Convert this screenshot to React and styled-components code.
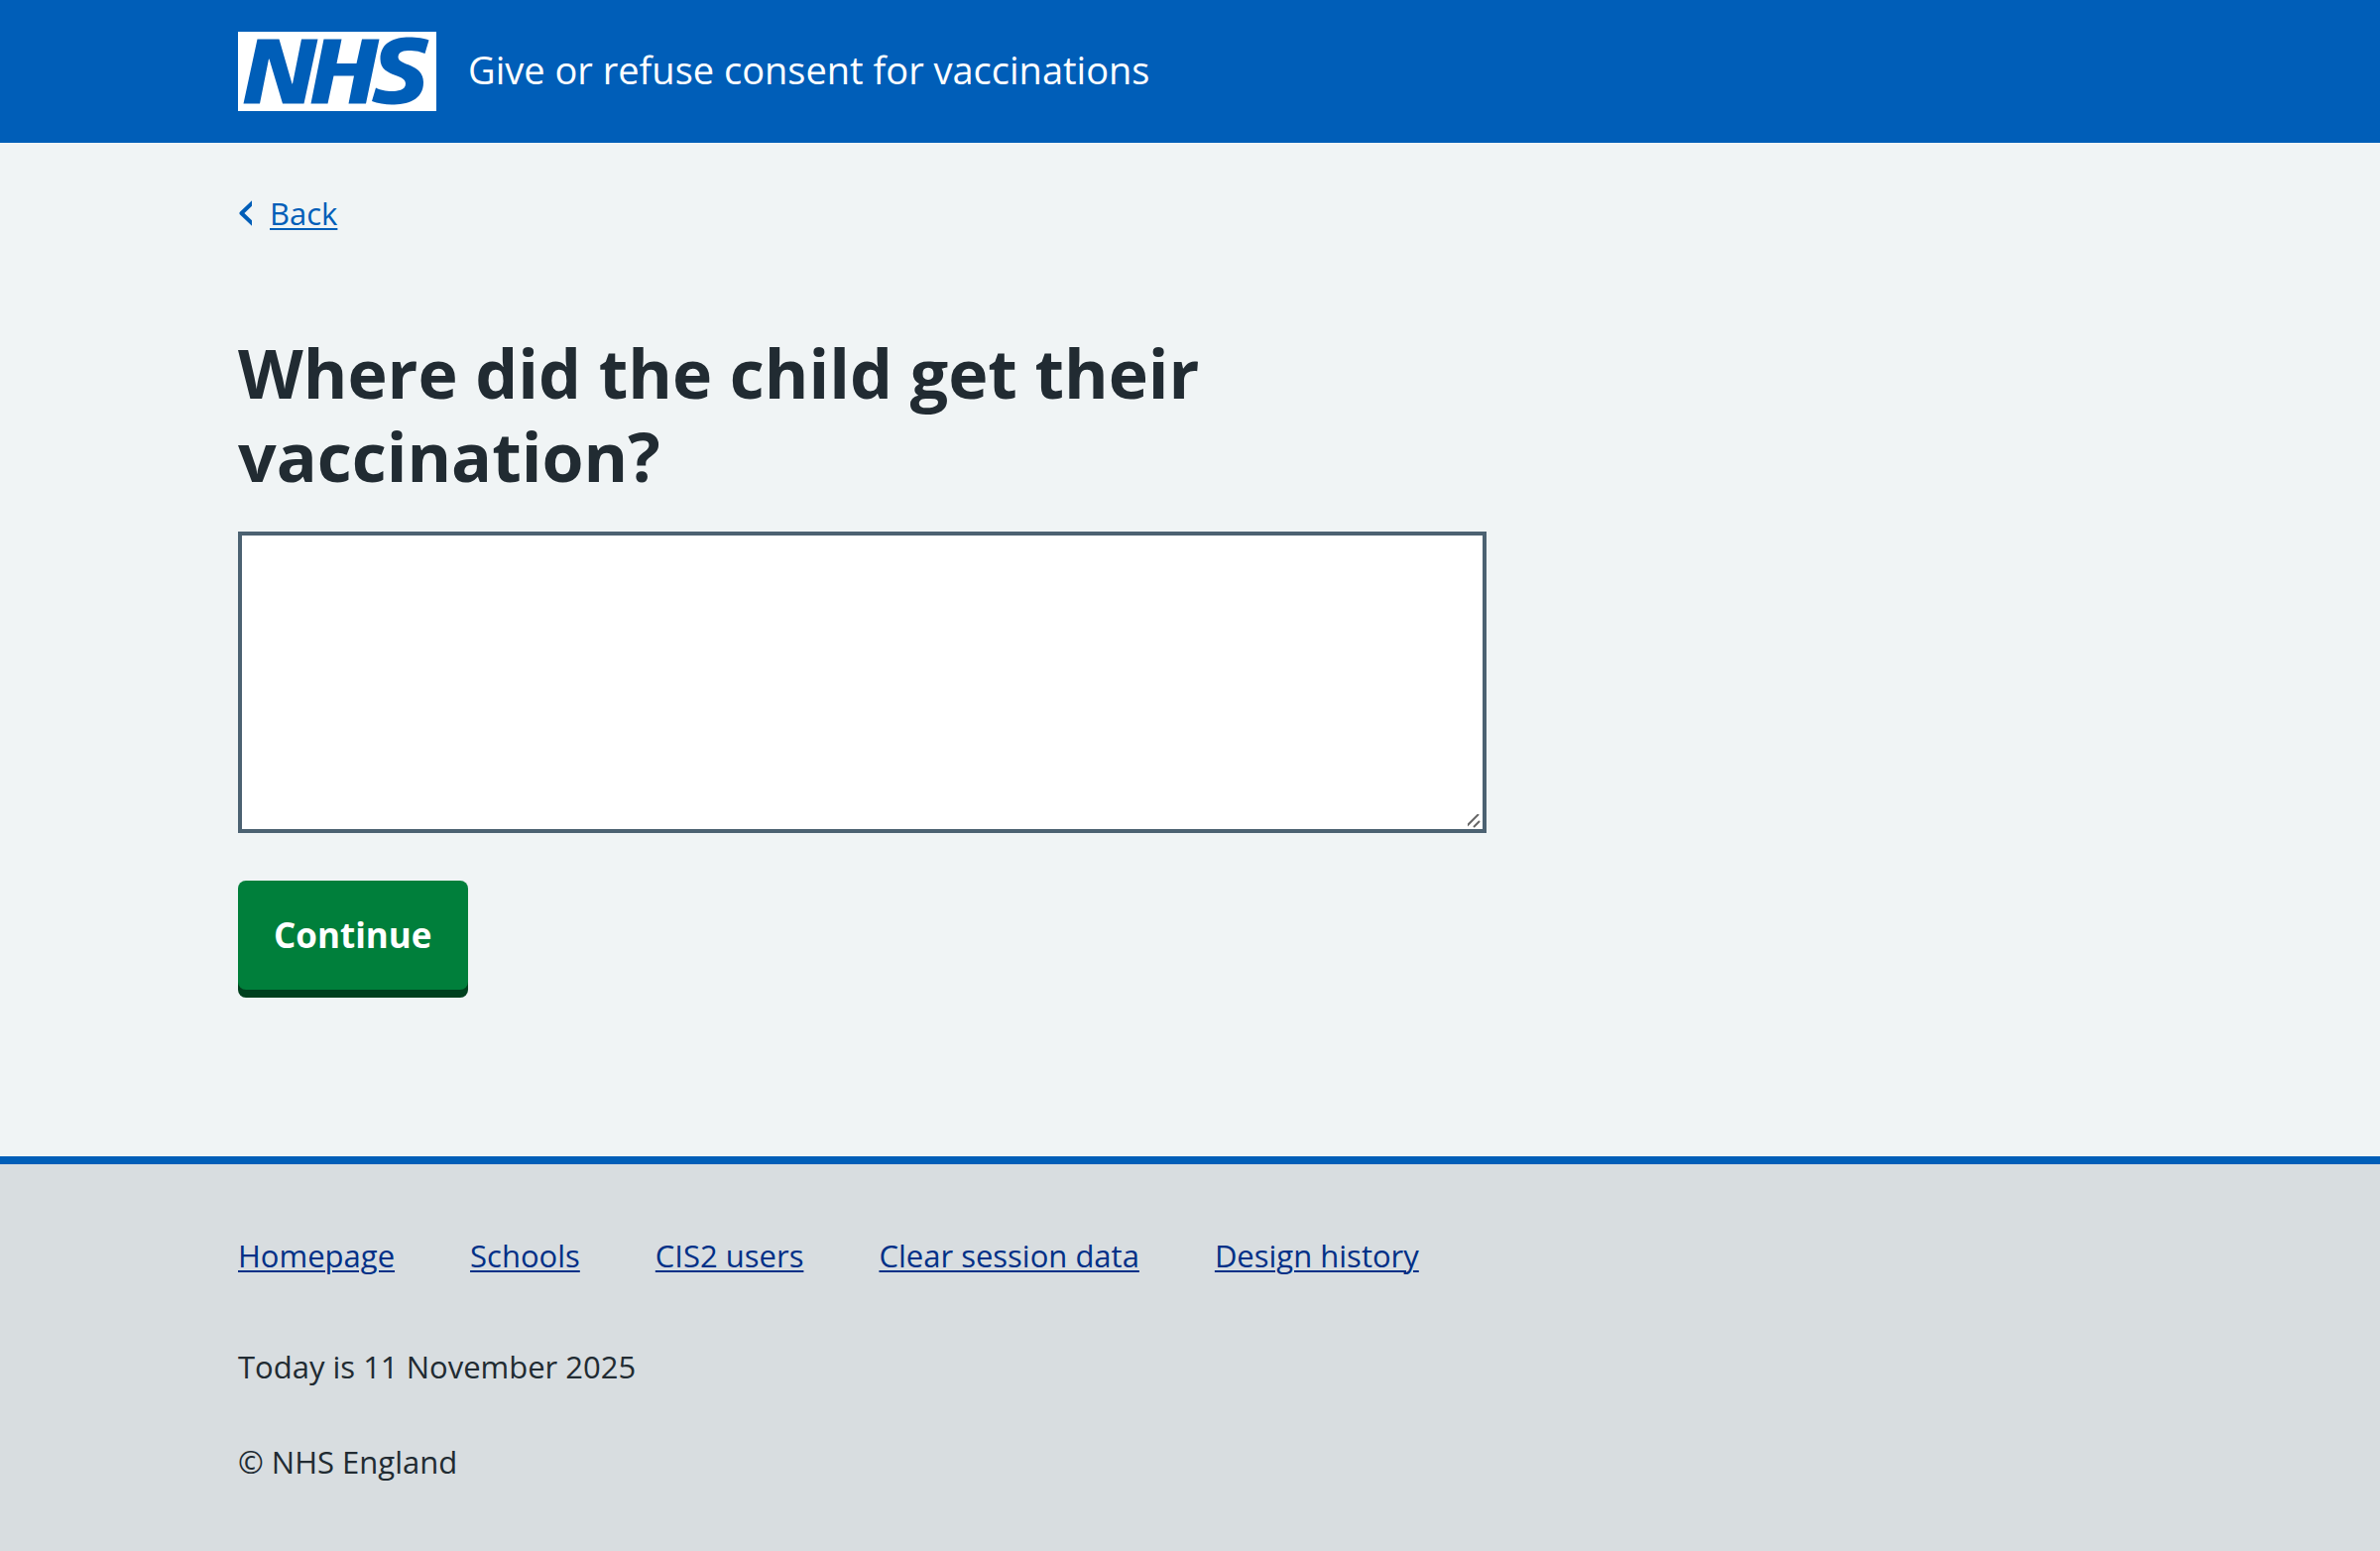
import React from "react";
import styled, { createGlobalStyle } from "styled-components";

const colour = {
  blue: "#005eb8",
  darkBlue: "#003087",
  page: "#f0f4f5",
  footer: "#d8dde0",
  text: "#212b32",
  border: "#4c6272",
  green: "#007f3b",
  darkGreen: "#00401e",
};

const GlobalStyle = createGlobalStyle`
  *, *::before, *::after { box-sizing: border-box; }
  html { background: ${colour.footer}; }
  body {
    margin: 0;
    background: ${colour.page};
    color: ${colour.text};
    font-family: "Open Sans", "Noto Sans", sans-serif;
    font-size: 31px;
    line-height: 48px;
  }
`;

const Container = styled.div`
  max-width: 1984px;
  margin: 0 auto;
  padding: 0 32px;
`;

const Header = styled.header`
  background: ${colour.blue};
  color: #fff;
`;

const HeaderLink = styled.a`
  display: inline-flex;
  align-items: center;
  gap: 32px;
  padding: 32px 0;
  color: inherit;
  font-size: 38px;
  text-decoration: none;
`;

const ServiceName = styled.span`
  padding-bottom: 4px;
`;

const Logo = styled.svg`
  display: block;
  flex: none;
  width: 200px;
  height: 80px;
`;

const BackLink = styled.a`
  display: inline-flex;
  align-items: center;
  gap: 18px;
  margin-top: 47px;
  color: ${colour.blue};
  text-decoration: none;
`;

const Chevron = styled.svg`
  width: 14px;
  height: 28px;
`;

const LinkText = styled.span`
  text-decoration: underline;
  text-decoration-thickness: 2px;
  text-underline-offset: 3px;
`;

const Main = styled.main`
  display: block;
  padding: 93px 0 168px;
`;

const Grid = styled.div`
  display: grid;
  grid-template-columns: repeat(3, 1fr);
  column-gap: 64px;
`;

const Form = styled.form`
  grid-column: span 2;
`;

const Heading = styled.h1`
  margin: 0 0 34px;
  font-size: 68px;
  font-weight: 700;
  line-height: 84px;
`;

const TextArea = styled.textarea`
  display: block;
  width: 100%;
  height: 304px;
  padding: 8px;
  border: 4px solid ${colour.border};
  border-radius: 0;
  background: #fff;
  color: ${colour.text};
  font: inherit;
  resize: vertical;

  &::-webkit-scrollbar {
    width: 20px;
    height: 20px;
  }

  &::-webkit-resizer {
    background: url("data:image/svg+xml,%3Csvg xmlns='http://www.w3.org/2000/svg' viewBox='0 0 20 20'%3E%3Cpath d='M4 17L16 5M11 18L17 12' stroke='%23666' stroke-width='2' fill='none'/%3E%3C/svg%3E")
      no-repeat right bottom / 20px 20px;
  }
`;

const Button = styled.button`
  display: block;
  margin-top: 48px;
  padding: 24px 36px;
  border: 0;
  border-radius: 8px;
  background: ${colour.green};
  box-shadow: 0 8px 0 ${colour.darkGreen};
  color: #fff;
  font: inherit;
  font-size: 35px;
  font-weight: 700;
  line-height: 62px;
  cursor: pointer;
`;

const Footer = styled.footer`
  padding: 68px 0 64px;
  border-top: 8px solid ${colour.blue};
  background: ${colour.footer};
`;

const FooterList = styled.ul`
  display: flex;
  flex-wrap: wrap;
  column-gap: 76px;
  margin: 0;
  padding: 0;
  list-style: none;
`;

const FooterLink = styled.a`
  color: ${colour.darkBlue};
  text-decoration-thickness: 2px;
  text-underline-offset: 3px;
`;

const FooterText = styled.p`
  margin: ${(p) => p.$space}px 0 0;
`;

const footerLinks = [
  "Homepage",
  "Schools",
  "CIS2 users",
  "Clear session data",
  "Design history",
];

export default function App() {
  return (
    <>
      <GlobalStyle />
      <Header>
        <Container>
          <HeaderLink href="#">
            <Logo viewBox="0 0 200 80" role="img" aria-label="NHS">
              <path
                fill="#fff"
                d="M200 0v80H0V0h200Zm-27.5 5.5c-14.5 0-29 5-29 22 0 10.2 7.7 13.5 14.7 16.3l.7.3c5.4 2 10.1 3.9 10.1 8.4 0 6.5-8.5 7.5-14 7.5s-12.5-1.5-16-3.5L135 70c5.5 2 13.5 3.5 20 3.5 15.5 0 32-4.5 32-22.5 0-19.5-25.5-16.5-25.5-25.5 0-5.5 5.5-6.5 12.5-6.5a35 35 0 0 1 14.5 3l4-13.5c-4.5-2-12-3-20-3Zm-131 2h-22l-14 65H22l9-45h.5l13.5 45h21.5l14-65H64l-9 45h-.5l-13-45Zm63 0h-18l-13 65h17l6-28H117l-5.5 28H129l13.5-65H125L119.5 32h-20l5-24.5Z"
              />
            </Logo>
            <ServiceName>Give or refuse consent for vaccinations</ServiceName>
          </HeaderLink>
        </Container>
      </Header>
      <Container>
        <BackLink href="#">
          <Chevron viewBox="0 0 14 28" aria-hidden="true">
            <path
              d="M16 2 L3.5 14 L16 26"
              fill="none"
              stroke="currentColor"
              strokeWidth="4"
              strokeLinejoin="round"
            />
          </Chevron>
          <LinkText>Back</LinkText>
        </BackLink>
        <Main>
          <Grid>
            <Form onSubmit={(e) => e.preventDefault()}>
              <Heading>
                <label htmlFor="location">
                  Where did the child get their vaccination?
                </label>
              </Heading>
              <TextArea id="location" name="location" rows={5} />
              <Button type="submit">Continue</Button>
            </Form>
          </Grid>
        </Main>
      </Container>
      <Footer>
        <Container>
          <FooterList>
            {footerLinks.map((label) => (
              <li key={label}>
                <FooterLink href="#">{label}</FooterLink>
              </li>
            ))}
          </FooterList>
          <FooterText $space={64}>Today is 11 November 2025</FooterText>
          <FooterText $space={48}>© NHS England</FooterText>
        </Container>
      </Footer>
    </>
  );
}
